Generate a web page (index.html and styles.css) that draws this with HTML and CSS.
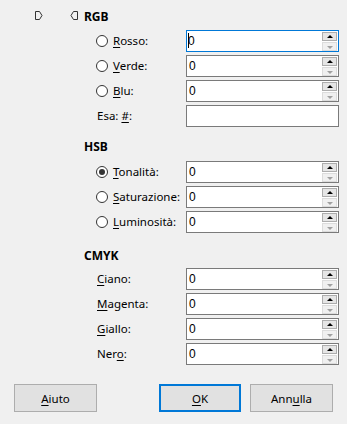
FILE: index.html
```html
<!DOCTYPE html>
<html lang="it">
<head>
<meta charset="utf-8">
<title>Colore</title>
<link rel="stylesheet" href="styles.css">
</head>
<body>
<div class="dlg">

  <div class="grp grp-rgb">
    <div class="head head-rgb">
      <svg class="mark" width="9" height="9" viewBox="0 0 9 9"><path d="M1.5 0.5h4l2.5 4l-2.5 4h-4z" fill="none" stroke="#333" stroke-width="1"/></svg>
      <svg class="mark mark-l" width="9" height="9" viewBox="0 0 9 9"><path d="M7.5 0.5h-4l-2.5 4l2.5 4h4z" fill="none" stroke="#333" stroke-width="1"/></svg>
      <span>RGB</span>
    </div>
    <div class="rows">
      <label class="opt"><span class="radio"></span><span><u>R</u>osso:</span></label>
      <div class="field focus"><span class="caret"></span><span class="val">0</span><span class="spin"><i class="up"></i><i class="dn"></i></span></div>

      <label class="opt"><span class="radio"></span><span><u>V</u>erde:</span></label>
      <div class="field"><span class="val">0</span><span class="spin"><i class="up"></i><i class="dn"></i></span></div>

      <label class="opt"><span class="radio"></span><span><u>B</u>lu:</span></label>
      <div class="field"><span class="val">0</span><span class="spin"><i class="up"></i><i class="dn"></i></span></div>

      <label class="lbl"><span>Esa: <u>#</u>:</span></label>
      <div class="field"><span class="val"></span></div>
    </div>
  </div>

  <div class="grp grp-hsb">
    <div class="head"><span>HSB</span></div>
    <div class="rows">
      <label class="opt"><span class="radio on"></span><span><u>T</u>onalità:</span></label>
      <div class="field"><span class="val">0</span><span class="spin"><i class="up"></i><i class="dn"></i></span></div>

      <label class="opt"><span class="radio"></span><span><u>S</u>aturazione:</span></label>
      <div class="field"><span class="val">0</span><span class="spin"><i class="up"></i><i class="dn"></i></span></div>

      <label class="opt"><span class="radio"></span><span><u>L</u>uminosità:</span></label>
      <div class="field"><span class="val">0</span><span class="spin"><i class="up"></i><i class="dn"></i></span></div>
    </div>
  </div>

  <div class="grp grp-cmyk">
    <div class="head"><span>CMYK</span></div>
    <div class="rows">
      <label class="lbl"><span><u>C</u>iano:</span></label>
      <div class="field"><span class="val">0</span><span class="spin"><i class="up"></i><i class="dn"></i></span></div>

      <label class="lbl"><span><u>M</u>agenta:</span></label>
      <div class="field"><span class="val">0</span><span class="spin"><i class="up"></i><i class="dn"></i></span></div>

      <label class="lbl"><span><u>G</u>iallo:</span></label>
      <div class="field"><span class="val">0</span><span class="spin"><i class="up"></i><i class="dn"></i></span></div>

      <label class="lbl"><span>Ner<u>o</u>:</span></label>
      <div class="field"><span class="val">0</span><span class="spin"><i class="up"></i><i class="dn"></i></span></div>
    </div>
  </div>

  <div class="foot">
    <button class="btn"><u>A</u>iuto</button>
    <div class="pair">
      <button class="btn btn-def"><u>O</u>K</button>
      <button class="btn">Ann<u>u</u>lla</button>
    </div>
  </div>

</div>
</body>
</html>
```

FILE: styles.css
```css
html,body{margin:0;padding:0;}
body{width:347px;height:424px;background:#f0f0f0;font:11.5px/16px "Noto Sans",sans-serif;color:#000;overflow:hidden;}
u{text-decoration:underline;text-underline-offset:2px;}

.dlg{padding-top:9px;}

.head{display:flex;align-items:center;height:16px;padding-left:84px;margin-bottom:5px;font-weight:700;font-size:12px;}
.head-rgb{padding-left:34px;}
.mark{display:block;flex:none;margin-top:-3px;}
.mark-l{margin-left:27px;margin-right:5px;}

.grp-hsb{margin-top:12px;}
.grp-cmyk{margin-top:15px;}
.grp-hsb .head{margin-bottom:6px;}
.grp-cmyk .head{margin-bottom:4px;}

.rows{display:grid;grid-template-columns:90px 153px;row-gap:3px;padding-left:96px;align-items:center;}
.opt,.lbl{display:flex;align-items:center;height:22px;white-space:nowrap;}
.lbl{padding-left:1px;}
.radio{width:10px;height:10px;border:1px solid #333;border-radius:50%;background:#fff;margin-right:5px;position:relative;flex:none;}
.radio.on::after{content:"";position:absolute;left:2px;top:2px;width:6px;height:6px;border-radius:50%;background:#333;}

.field{display:flex;height:22px;box-sizing:border-box;border:1px solid #7a7a7a;background:#fff;align-items:stretch;}
.field.focus{border-color:#0078d7;}
.val{flex:1;padding-left:2px;font:12px/20px "Liberation Sans",Arial,sans-serif;color:#000;}
.caret{width:1px;background:#000;margin:2px 0 3px 1px;flex:none;}
.caret + .val{padding-left:0;margin-left:-1px;}
.spin{display:flex;flex-direction:column;gap:1px;margin:1px 1px 0 0;width:15px;}
.spin i{display:block;height:9px;box-sizing:border-box;position:relative;}
.spin .up{border:1px solid #adadad;background:#e5e5e5;}
.spin .dn{border:1px solid #dcdcdc;background:#f0f0f0;}
.spin i::after{content:"";position:absolute;left:50%;top:50%;margin-left:-3px;border-left:3px solid transparent;border-right:3px solid transparent;}
.spin .up::after{border-bottom:3px solid #000;margin-top:-2px;}
.spin .dn::after{border-top:3px solid #a0a0a0;margin-top:-1px;}

.foot{display:flex;justify-content:space-between;margin-top:19px;padding:0 14px;}
.pair{display:flex;gap:9px;}
.btn{width:83px;height:28px;box-sizing:border-box;border:1px solid #adadad;background:#e1e1e1;font:11.5px "Noto Sans",sans-serif;color:#000;padding:0;}
.btn-def{width:82px;border:2px solid #0078d7;}
```
